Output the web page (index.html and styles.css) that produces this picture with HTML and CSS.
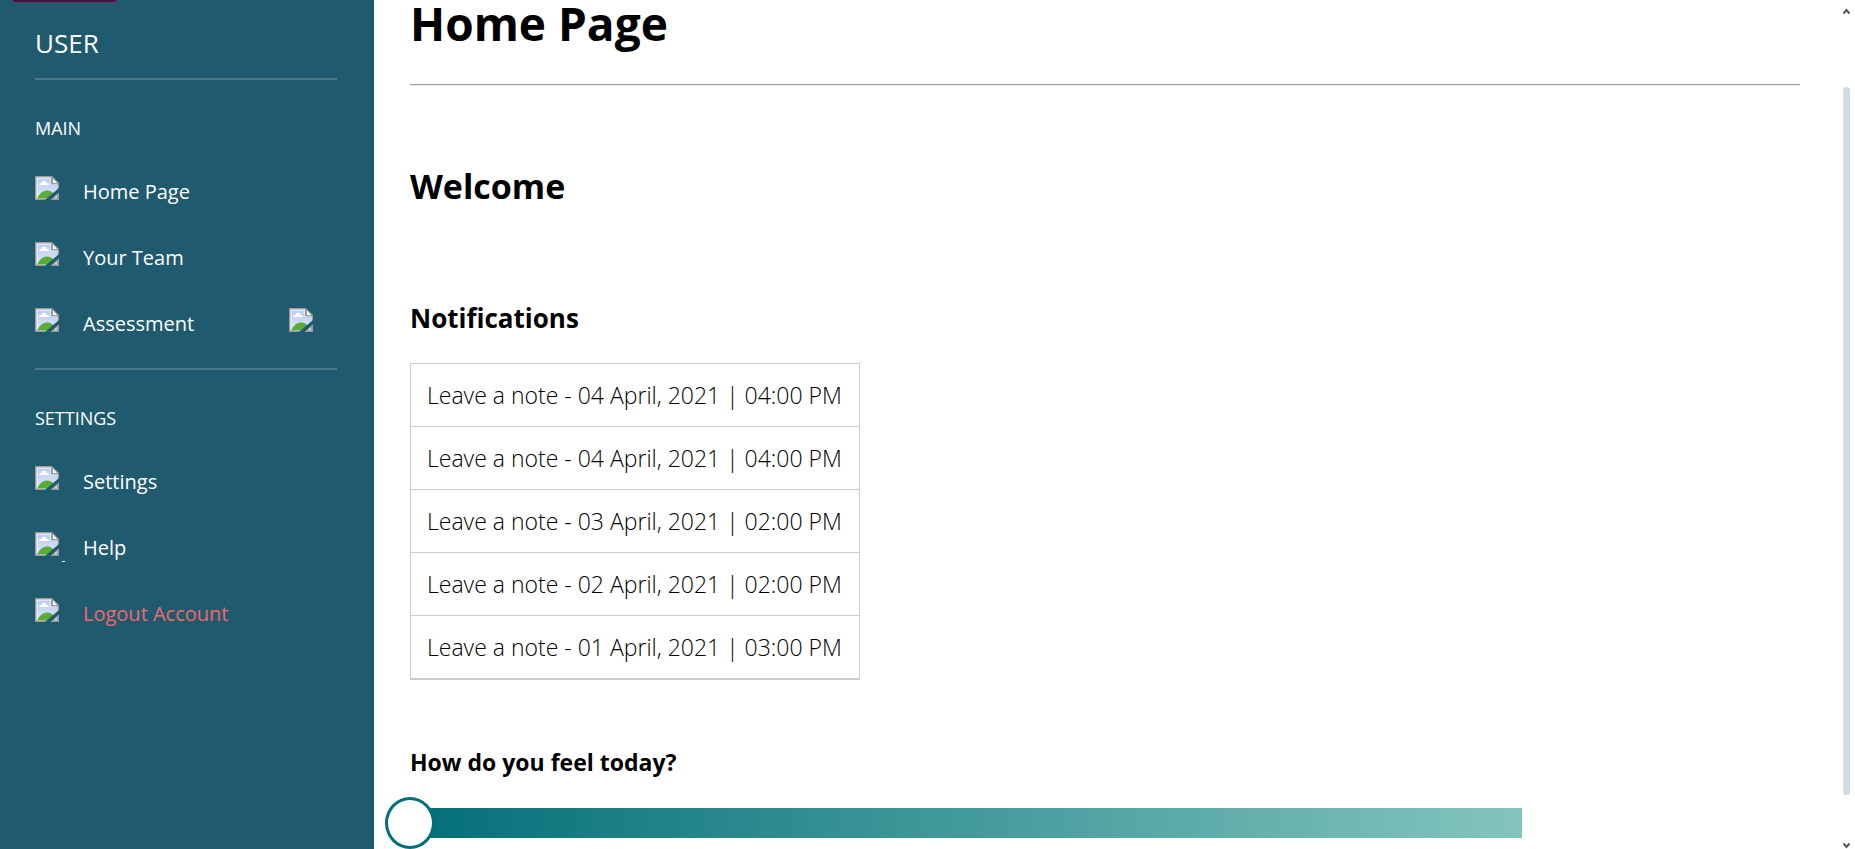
FILE: index.html
```
<!DOCTYPE html>
<html lang="en">
<head>
<meta charset="utf-8">
<title>Home Page</title>
<link rel="stylesheet" href="styles.css">
</head>
<body>
<svg class="defs" aria-hidden="true">
  <defs>
    <linearGradient id="sky" x1="0" y1="0" x2="0" y2="1"><stop offset="0" stop-color="#b9cdf0"/><stop offset="1" stop-color="#dbe5f9"/></linearGradient>
    <symbol id="picture" viewBox="0 0 24 24">
      <path d="M0 0h17l7 7v17H0z" fill="#9b9b9b"/>
      <path d="M1.500 1.500h14.500v7h6.500v14H1.500z" fill="#fff"/>
      <path d="M2.500 2.500h13v6.500h6.500v13.500H2.500z" fill="url(#sky)"/>
      <path d="M4 9q0-2 2-2 .8-2.500 3-2.500T11.500 7Q14 7 14 9z" fill="#fff"/>
      <path d="M2 22.500Q6 14.500 12 14.500q5 0 8 5l1 3z" fill="#5aac36"/>
      <path d="M18 2.500l4 4.500h-4z" fill="#fff"/>
      <path d="M24 12L10 24h5.500L24 16.500z" fill="#1f5a6f"/>
      <path d="M24 16.500V24h-8.500z" fill="#9b9b9b"/>
      <path d="M22 19v3.500h-3.500z" fill="#c3d2ee"/>
    </symbol>
  </defs>
</svg>
<div class="layout">
  <nav class="sidebar">
    <div class="badge"></div>
    <div class="sidebar-body">
      <p class="user">USER</p>
      <section class="group">
        <h2 class="group-title">MAIN</h2>
        <ul class="menu">
          <li><a class="item" href="#"><svg class="icon"><use href="#picture"/></svg>Home Page</a></li>
          <li><a class="item" href="#"><svg class="icon"><use href="#picture"/></svg>Your Team</a></li>
          <li><a class="item" href="#"><svg class="icon"><use href="#picture"/></svg>Assessment<svg class="icon icon-end"><use href="#picture"/></svg></a></li>
        </ul>
      </section>
      <section class="group">
        <h2 class="group-title">SETTINGS</h2>
        <ul class="menu">
          <li><a class="item" href="#"><svg class="icon"><use href="#picture"/></svg>Settings</a></li>
          <li><a class="item" href="#"><svg class="icon"><use href="#picture"/><path d="M27 29h3v1h-3z" fill="#fff"/></svg>Help</a></li>
          <li><a class="item item-logout" href="#"><svg class="icon"><use href="#picture"/></svg>Logout Account</a></li>
        </ul>
      </section>
    </div>
  </nav>
  <main class="content">
    <h1 class="page-title">Home Page</h1>
    <hr class="rule">
    <h2 class="welcome">Welcome</h2>
    <h3 class="notes-title">Notifications</h3>
    <table class="notes">
      <tbody>
        <tr><td>Leave a note - 04 April, 2021 | 04:00 PM</td></tr>
        <tr><td>Leave a note - 04 April, 2021 | 04:00 PM</td></tr>
        <tr><td>Leave a note - 03 April, 2021 | 02:00 PM</td></tr>
        <tr><td>Leave a note - 02 April, 2021 | 02:00 PM</td></tr>
        <tr><td>Leave a note - 01 April, 2021 | 03:00 PM</td></tr>
      </tbody>
    </table>
    <label class="mood-label" for="mood">How do you feel today?</label>
    <input class="mood" id="mood" type="range" min="0" max="100" value="0">
  </main>
  <div class="scroll" aria-hidden="true">
    <svg class="arrow" viewBox="0 0 7 7"><path d="M.5 5.500l3-3.500 3 3.500" fill="none" stroke="#555" stroke-width="2"/></svg>
    <div class="scroll-thumb"></div>
    <svg class="arrow" viewBox="0 0 7 7"><path d="M.5 1.500l3 3.500 3-3.500" fill="none" stroke="#555" stroke-width="2"/></svg>
  </div>
</div>
</body>
</html>
```
FILE: styles.css
```
* { box-sizing: border-box; }
body {
  margin: 0;
  font-family: "Open Sans", "Noto Sans", sans-serif;
  color: #000;
  background: #fff;
}
h1, h2, h3, p, ul { margin: 0; padding: 0; }
.defs { position: absolute; width: 0; height: 0; }
.layout { display: flex; height: 100vh; overflow: hidden; }

.sidebar { flex: 0 0 374px; background: #1f5a6f; color: #fff; }
.badge {
  width: 105px;
  height: 3px;
  margin-left: 12px;
  background: #3b1a40;
  border: solid #7b2a6d;
  border-width: 0 1px 1px;
  border-radius: 0 0 3px 3px;
}
.sidebar-body { padding: 21px 37px 0 35px; }
.user { font-size: 26px; line-height: 38px; padding-bottom: 16px; }
.group { border-top: 2px solid #4b7a8b; padding-top: 34px; height: 290px; }
.group-title { font-size: 18px; font-weight: 400; line-height: 28px; margin-bottom: 34px; }
.menu { list-style: none; display: grid; gap: 34px; }
.item {
  display: flex;
  align-items: flex-start;
  height: 32px;
  color: inherit;
  font-size: 20px;
  line-height: 32px;
  text-decoration: none;
}
.item-logout { color: #f0696a; }
.icon { width: 24px; height: 24px; margin-right: 24px; overflow: visible; flex: none; }
.icon-end { margin-left: auto; }

.content { flex: 1; min-width: 0; padding: 0 43px 0 36px; }
.page-title { font-size: 46px; line-height: 46px; padding-bottom: 30px; }
.rule { margin: 8px 0 68px; border: solid; border-width: 1px 0; border-color: #999 transparent #eee; }
.welcome { font-size: 34px; line-height: 64px; margin-bottom: 80px; }
.notes-title { font-size: 26px; line-height: 40px; margin-bottom: 25px; }
.notes { border: 1px solid #ccc; border-spacing: 0; margin-bottom: 62px; }
.notes td {
  padding: 0 17px 0 16px;
  height: 63px;
  font-size: 23px;
  font-weight: 300;
  border-bottom: 1px solid #ccc;
}
.mood-label { display: block; font-size: 23px; font-weight: 700; line-height: 40px; margin-bottom: 26px; }
.mood {
  -webkit-appearance: none;
  appearance: none;
  display: block;
  width: 80%;
  height: 30px;
  margin: 0;
  background: linear-gradient(to right, #036f79, #83c5bd);
  outline: none;
}
.mood::-webkit-slider-thumb {
  -webkit-appearance: none;
  width: 50px;
  height: 52px;
  margin-left: -25px;
  border: 3px solid #036f79;
  border-radius: 50%;
  background: #fff;
}

.scroll {
  flex: 0 0 12px;
  display: flex;
  flex-direction: column;
  padding: 8px 5px 0 0;
}
.arrow { width: 7px; height: 7px; flex: none; }
.scroll-thumb { flex: 1; margin: 72px 0 47px; border-radius: 4px; background: #d0dbe4; }
```
